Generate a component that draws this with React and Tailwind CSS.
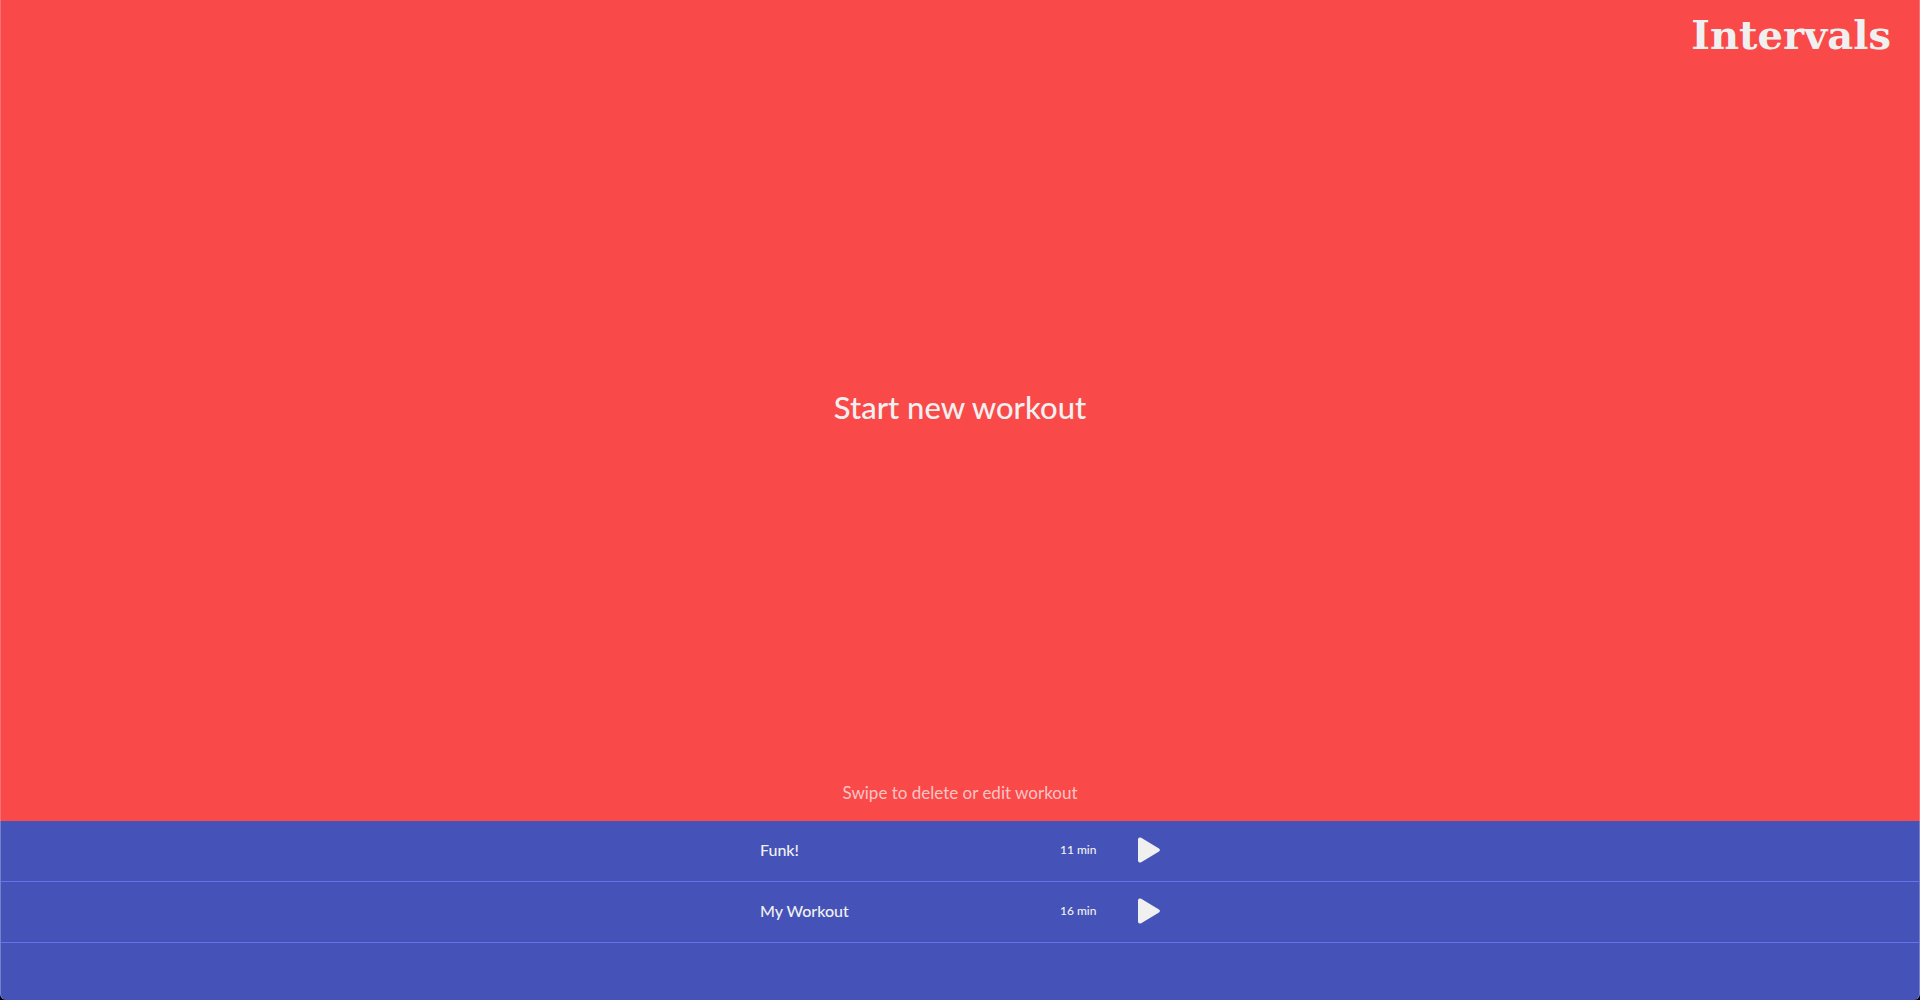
const workouts = [
  { name: "Funk!", duration: "11 min" },
  { name: "My Workout", duration: "16 min" },
];

function PlayIcon() {
  return (
    <svg viewBox="0 0 22 26" className="h-[26px] w-[22px]" fill="currentColor" aria-hidden="true">
      <path d="M0 2.4C0 .6 1.7-.1 3.2.8L21 11.6C22.2 12.3 22.2 13.7 21 14.4L3.2 25.2C1.7 26.1 0 25.4 0 23.6Z" />
    </svg>
  );
}

function WorkoutRow({ name, duration }) {
  return (
    <li className="border-b border-[#6474ea]">
      <div className="mx-auto flex h-[60px] w-[400px] items-center pb-0.5">
        <span className="w-[300px] text-base font-medium">{name}</span>
        <span className="grow text-xs font-medium">{duration}</span>
        <button type="button" aria-label={`Play ${name}`} className="text-[#f0f0f0]">
          <PlayIcon />
        </button>
      </div>
    </li>
  );
}

export default function App() {
  return (
    <div className="h-screen bg-black">
      <main className="flex h-full flex-col overflow-hidden rounded-b-md bg-[#4553b8] font-['Lato',sans-serif] text-[#f0f0f0]">
        <section className="relative flex grow flex-col items-center border-x border-[#fa7070] bg-[#fa4949]">
          <h1 className="absolute top-[7px] right-7 font-['DejaVu_Serif',serif] text-[40px] leading-[56px] font-bold">
            Intervals
          </h1>
          <button type="button" className="w-full grow pt-8 text-[31px] leading-10 font-medium">
            Start new workout
          </button>
          <p className="pb-4 text-[17px] leading-6 text-[#fdc4c4]">Swipe to delete or edit workout</p>
        </section>
        <ul className="h-[179px] shrink-0 rounded-b-md border-x border-[#7480cb]">
          {workouts.map((workout) => (
            <WorkoutRow key={workout.name} {...workout} />
          ))}
        </ul>
      </main>
    </div>
  );
}
